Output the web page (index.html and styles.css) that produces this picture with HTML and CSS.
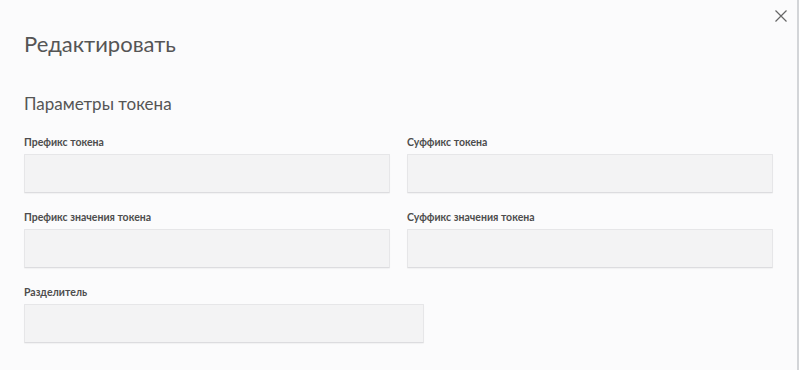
FILE: index.html
```html
<html lang="ru">
<head>
  <meta charset="UTF-8">
  <meta name="viewport" content="width=device-width, initial-scale=1.0">
  <title>Редактировать</title>
  <link rel="stylesheet" href="styles.css">
</head>
<body>
  <div class="modal">
    <button class="close" aria-label="Закрыть">
      <svg width="12" height="12" viewBox="0 0 12 12">
        <path d="M0.5 0.5 L11.5 11.5 M11.5 0.5 L0.5 11.5" stroke="#666" stroke-width="1.2" fill="none"/>
      </svg>
    </button>

    <h1>Редактировать</h1>
    <h2>Параметры токена</h2>

    <div class="grid">
      <div class="field">
        <label for="prefix">Префикс токена</label>
        <input type="text" id="prefix">
      </div>
      <div class="field">
        <label for="suffix">Суффикс токена</label>
        <input type="text" id="suffix">
      </div>
      <div class="field">
        <label for="valuePrefix">Префикс значения токена</label>
        <input type="text" id="valuePrefix">
      </div>
      <div class="field">
        <label for="valueSuffix">Суффикс значения токена</label>
        <input type="text" id="valueSuffix">
      </div>
    </div>

    <div class="field separator">
      <label for="separator">Разделитель</label>
      <input type="text" id="separator">
    </div>
  </div>
</body>
</html>
```

FILE: styles.css
```css
body {
  margin: 0;
  padding: 0;
  background-color: #fbfbfc;
  font-family: Lato, "Open Sans", sans-serif;
  color: #555;
}

.modal {
  position: relative;
  height: 370px;
  box-sizing: border-box;
  padding: 29px 24px 0 24px;
  border-right: 2px solid #d3d5d8;
}

.close {
  position: absolute;
  top: 9px;
  right: 9px;
  width: 14px;
  height: 14px;
  padding: 1px;
  border: none;
  background: none;
  cursor: pointer;
}

h1 {
  margin: 0;
  font-size: 22px;
  font-weight: 400;
  line-height: 30px;
  color: #555;
}

h2 {
  margin: 34px 0 0;
  font-size: 17px;
  font-weight: 400;
  line-height: 22px;
  color: #555;
}

.grid {
  display: grid;
  grid-template-columns: 1fr 1fr;
  column-gap: 17px;
  row-gap: 17px;
  margin-top: 20px;
}

.field label {
  display: block;
  font-size: 10.5px;
  font-weight: 700;
  line-height: 14px;
  margin-bottom: 5px;
  color: #4d4d4d;
}

.field input {
  display: block;
  width: 100%;
  height: 39px;
  box-sizing: border-box;
  background-color: #f3f3f4;
  border: 1px solid #e6e6e8;
  border-bottom-color: #dcdcdf;
  border-radius: 1px;
  box-shadow: 0 1px 1px rgba(0, 0, 0, 0.04);
}

.separator {
  width: 400px;
  margin-top: 17px;
}
```
